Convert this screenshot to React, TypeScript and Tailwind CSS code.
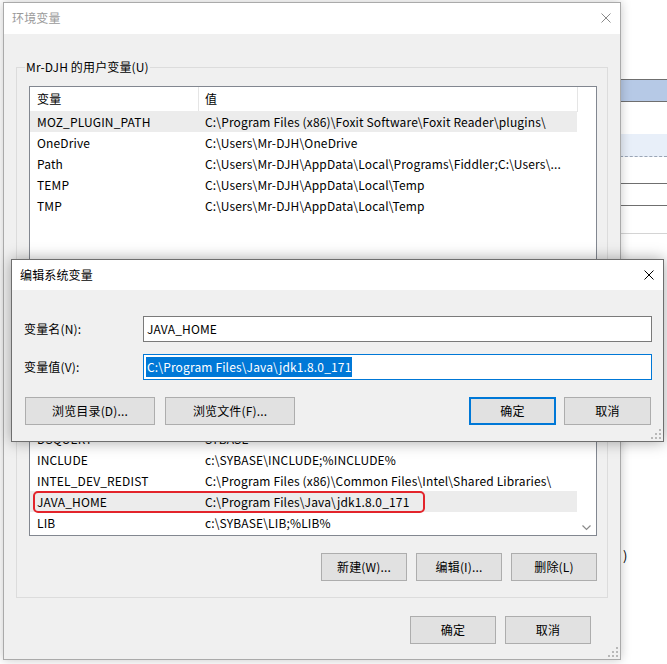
const CloseX = ({ color }: { color: string }) => (
  <svg width="10" height="10" viewBox="0 0 10 10">
    <path d="M0.5 0.5L9.5 9.5M9.5 0.5L0.5 9.5" stroke={color} strokeWidth="1" />
  </svg>
)

const Grip = () => (
  <svg width="10" height="10" viewBox="0 0 10 10" fill="#b8b8b8">
    <rect x="8" y="0" width="2" height="2" />
    <rect x="8" y="4" width="2" height="2" />
    <rect x="8" y="8" width="2" height="2" />
    <rect x="4" y="4" width="2" height="2" />
    <rect x="4" y="8" width="2" height="2" />
    <rect x="0" y="8" width="2" height="2" />
  </svg>
)

const Btn = ({
  children,
  className = '',
  primary = false,
}: {
  children: React.ReactNode
  className?: string
  primary?: boolean
}) => (
  <div
    className={`flex h-[28px] items-center justify-center bg-[#e1e1e1] leading-[16px] ${
      primary ? 'border-2 border-[#0078d7]' : 'border border-[#adadad]'
    } ${className}`}
  >
    {children}
  </div>
)

type Item = { name: string; value: string; sel?: boolean; mark?: boolean }

const Row = ({ name, value, sel, mark }: Item) => (
  <div className={`relative flex h-[21px] w-[547px] shrink-0 items-center leading-[16px] ${sel ? 'bg-[#ececec]' : ''}`}>
    <div className="w-[169px] overflow-hidden whitespace-nowrap pl-[7px]">{name}</div>
    <div className="flex-1 overflow-hidden whitespace-nowrap pl-[6px]">{value}</div>
    {mark && (
      <div className="absolute left-[3px] top-0 h-[22px] w-[392px] rounded-[5px] border-2 border-[#e3242b]" />
    )}
  </div>
)

const Header = () => (
  <div className="flex h-[25px] shrink-0 leading-[16px]">
    <div className="flex w-[169px] items-center border-r border-[#e5e5e5] pb-[1px] pl-[7px]">变量</div>
    <div className="flex w-[379px] items-center border-r border-[#e5e5e5] pb-[1px] pl-[6px]">值</div>
  </div>
)

const userVars: Item[] = [
  { name: 'MOZ_PLUGIN_PATH', value: 'C:\\Program Files (x86)\\Foxit Software\\Foxit Reader\\plugins\\', sel: true },
  { name: 'OneDrive', value: 'C:\\Users\\Mr-DJH\\OneDrive' },
  { name: 'Path', value: 'C:\\Users\\Mr-DJH\\AppData\\Local\\Programs\\Fiddler;C:\\Users\\...' },
  { name: 'TEMP', value: 'C:\\Users\\Mr-DJH\\AppData\\Local\\Temp' },
  { name: 'TMP', value: 'C:\\Users\\Mr-DJH\\AppData\\Local\\Temp' },
]

const sysVars: Item[] = [
  { name: 'DriverData', value: 'C:\\Windows\\System32\\Drivers\\DriverData' },
  { name: 'DSQUERY', value: 'SYBASE' },
  { name: 'INCLUDE', value: 'c:\\SYBASE\\INCLUDE;%INCLUDE%' },
  { name: 'INTEL_DEV_REDIST', value: 'C:\\Program Files (x86)\\Common Files\\Intel\\Shared Libraries\\' },
  { name: 'JAVA_HOME', value: 'C:\\Program Files\\Java\\jdk1.8.0_171', sel: true, mark: true },
  { name: 'LIB', value: 'c:\\SYBASE\\LIB;%LIB%' },
]

export default function App() {
  return (
    <div className="relative h-[664px] w-[667px] overflow-hidden bg-white text-[12px] tracking-[0.15px] text-black [font-family:'Noto_Sans_CJK_SC',sans-serif]">
      {/* window behind, right edge */}
      <div className="absolute inset-y-0 right-0 flex w-[47px] flex-col">
        <div className="h-[79px] shrink-0" />
        <div className="h-[23px] shrink-0 border-y border-[#6f6f6f] bg-[#b6c9e6]" />
        <div className="h-[32px] shrink-0" />
        <div className="h-[23px] shrink-0 border-b border-dashed border-[#9aa5b5] bg-[#e8eff9]" />
        <div className="h-[26px] shrink-0" />
        <div className="h-[23px] shrink-0 border-y border-[#6f6f6f]" />
        <div className="h-[28px] shrink-0 border-b border-[#d4d4d4]" />
        <div className="mt-[312px] pl-[3px] text-[13px]">)</div>
      </div>

      {/* 环境变量 */}
      <div className="absolute left-[3px] top-[2px] flex h-[658px] w-[618px] flex-col border border-[#aaaaaa] bg-[#f0f0f0] shadow-[0_0_10px_rgba(0,0,0,0.22)]">
        <div className="flex h-[31px] shrink-0 items-center justify-between bg-white pb-[2px] pl-[8px] pr-[9px]">
          <span className="leading-[16px] text-[#9a9a9a]">环境变量</span>
          <CloseX color="#8a8a8a" />
        </div>
        <div className="relative flex flex-1 flex-col px-[12px]">
          <div className="relative mt-[33px] h-[287px] shrink-0 border border-[#dcdcdc] pl-[12px] pr-[10px] pt-[18px]">
            <span className="absolute left-[8px] top-[-9px] bg-[#f0f0f0] px-[1px] leading-[16px]">
              Mr-DJH 的用户变量(U)
            </span>
            <div className="flex h-[300px] flex-col border border-[#828790] bg-white">
              <Header />
              <div className="flex flex-col -translate-y-[1px]">
                {userVars.map((v) => (
                  <Row key={v.name} {...v} />
                ))}
              </div>
            </div>
          </div>

          <div className="relative mt-[8px] flex shrink-0 flex-col border border-[#dcdcdc] pb-[16px] pl-[12px] pr-[10px] pt-[18px]">
            <span className="absolute left-[8px] top-[-9px] bg-[#f0f0f0] px-[1px] leading-[16px]">系统变量(S)</span>
            <div className="flex h-[155px] border border-[#828790] bg-white">
              <div className="flex flex-1 flex-col overflow-hidden pb-[2px]">
                <Header />
                <div className="flex flex-1 flex-col justify-end overflow-hidden">
                  {sysVars.map((v) => (
                    <Row key={v.name} {...v} />
                  ))}
                </div>
              </div>
              <div className="flex w-[18px] flex-col justify-end pb-[4px] pl-[4px]">
                <svg width="9" height="6" viewBox="0 0 9 6">
                  <path d="M0.5 0.5L4.5 4.5L8.5 0.5" stroke="#8a8a8a" strokeWidth="1.2" fill="none" />
                </svg>
              </div>
            </div>
            <div className="mt-[17px] flex justify-end gap-[9px]">
              <Btn className="w-[86px]">新建(W)...</Btn>
              <Btn className="w-[86px]">编辑(I)...</Btn>
              <Btn className="w-[86px]">删除(L)</Btn>
            </div>
          </div>

          <div className="mr-[17px] mt-[18px] flex justify-end gap-[9px]">
            <Btn className="w-[86px]">确定</Btn>
            <Btn className="w-[86px]">取消</Btn>
          </div>
          <div className="absolute bottom-[2px] right-[2px]">
            <Grip />
          </div>
        </div>
      </div>

      {/* 编辑系统变量 */}
      <div className="absolute left-[11px] top-[259px] flex h-[183px] w-[653px] flex-col border border-[#6e6e6e] bg-[#f0f0f0] shadow-[0_0_14px_rgba(0,0,0,0.35)]">
        <div className="flex h-[30px] shrink-0 items-center justify-between bg-white pb-[1px] pl-[8px] pr-[9px]">
          <span className="leading-[16px]">编辑系统变量</span>
          <CloseX color="#000" />
        </div>
        <div className="relative flex flex-1 flex-col pl-[12px] pr-[11px] pt-[26px]">
          <div className="flex h-[26px] items-center leading-[16px]">
            <div className="w-[119px]">变量名(N):</div>
            <div className="flex h-full flex-1 items-center border border-[#7a7a7a] bg-white pl-[3px]">JAVA_HOME</div>
          </div>
          <div className="mt-[12px] flex h-[26px] items-center leading-[16px]">
            <div className="w-[119px]">变量值(V):</div>
            <div className="flex h-full flex-1 items-center border border-[#0078d7] bg-white pl-[2px]">
              <span className="bg-[#0078d7] px-[1px] py-[2px] text-white">C:\Program Files\Java\jdk1.8.0_171</span>
            </div>
          </div>
          <div className="mt-[17px] flex items-center">
            <div className="ml-[1px] flex gap-[10px]">
              <Btn className="w-[130px]">浏览目录(D)...</Btn>
              <Btn className="w-[130px]">浏览文件(F)...</Btn>
            </div>
            <div className="ml-auto mr-[1px] flex gap-[8px]">
              <Btn primary className="w-[87px]">确定</Btn>
              <Btn className="w-[87px]">取消</Btn>
            </div>
          </div>
          <div className="absolute bottom-[2px] right-[2px]">
            <Grip />
          </div>
        </div>
      </div>
    </div>
  )
}
